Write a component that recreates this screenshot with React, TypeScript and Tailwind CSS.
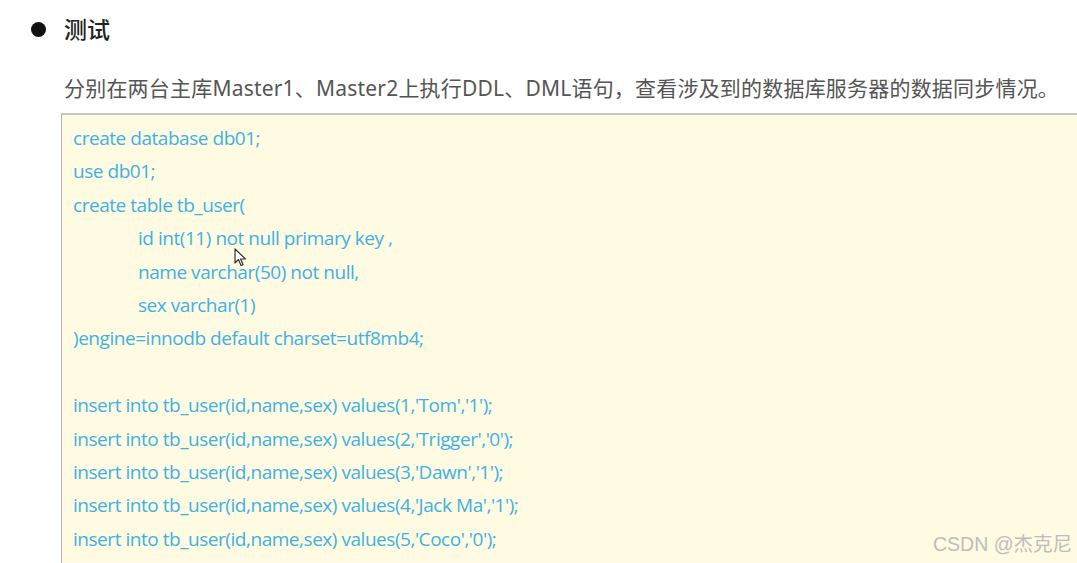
import React from 'react'

const codeLines: { text: string; indent?: boolean }[] = [
  { text: 'create database db01;' },
  { text: 'use db01;' },
  { text: 'create table tb_user(' },
  { text: 'id int(11) not null primary key  ,', indent: true },
  { text: 'name varchar(50) not null,', indent: true },
  { text: 'sex varchar(1)', indent: true },
  { text: ')engine=innodb default charset=utf8mb4;' },
  { text: '' },
  { text: "insert into tb_user(id,name,sex) values(1,'Tom','1');" },
  { text: "insert into tb_user(id,name,sex) values(2,'Trigger','0');" },
  { text: "insert into tb_user(id,name,sex) values(3,'Dawn','1');" },
  { text: "insert into tb_user(id,name,sex) values(4,'Jack Ma','1');" },
  { text: "insert into tb_user(id,name,sex) values(5,'Coco','0');" },
  { text: "insert into tb_user(id,name,sex) values(6,'Jerry','1');" },
]

const Cursor = () => (
  <svg width="14" height="20" viewBox="0 0 14 20" className="absolute left-[234px] top-[248px]">
    <path d="M1 1 L1 15 L4.5 11.5 L7 17.5 L9 16.6 L6.6 11 L11.5 11 Z" fill="#fff" stroke="#333" strokeWidth="1.2" strokeLinejoin="round" />
  </svg>
)

export default function App() {
  return (
    <div className="relative w-[1077px] h-[563px] overflow-hidden bg-white font-['Noto_Sans','Noto_Sans_CJK_SC',sans-serif]">
      {/* heading */}
      <div className="flex items-center h-[58px] pl-[31px]">
        <span className="w-[15px] h-[15px] rounded-full bg-[#111]" />
        <span className="ml-[18px] text-[23px] text-[#222] font-medium">测试</span>
      </div>

      <p className="ml-[64px] mt-[12px] text-[21px] leading-[36px] text-[#555] tracking-[0.2px] whitespace-nowrap">
        分别在两台主库Master1、Master2上执行DDL、DML语句，查看涉及到的数据库服务器的数据同步情况。
      </p>

      {/* code box */}
      <div className="ml-[61px] mt-[7px] border-t-2 border-l border-t-[#c9c7bc] border-l-[#b5b3aa] bg-[#fffae2] pt-[7px] pl-[11px] pr-0">
        {codeLines.map((l, i) => (
          <div
            key={i}
            className={`h-[33.4px] leading-[33.4px] text-[19px] text-[#3eb2e2] tracking-[-0.46px] whitespace-nowrap font-['Open_Sans',sans-serif] ${l.indent ? 'pl-[65px]' : ''}`}
          >
            {l.text}
          </div>
        ))}
      </div>

      <Cursor />

      <div className="absolute right-[5px] bottom-[4px] text-[19.5px] text-[#bdbdbd] font-['Liberation_Sans','Noto_Sans_CJK_SC',sans-serif]">
        CSDN @杰克尼
      </div>
    </div>
  )
}
